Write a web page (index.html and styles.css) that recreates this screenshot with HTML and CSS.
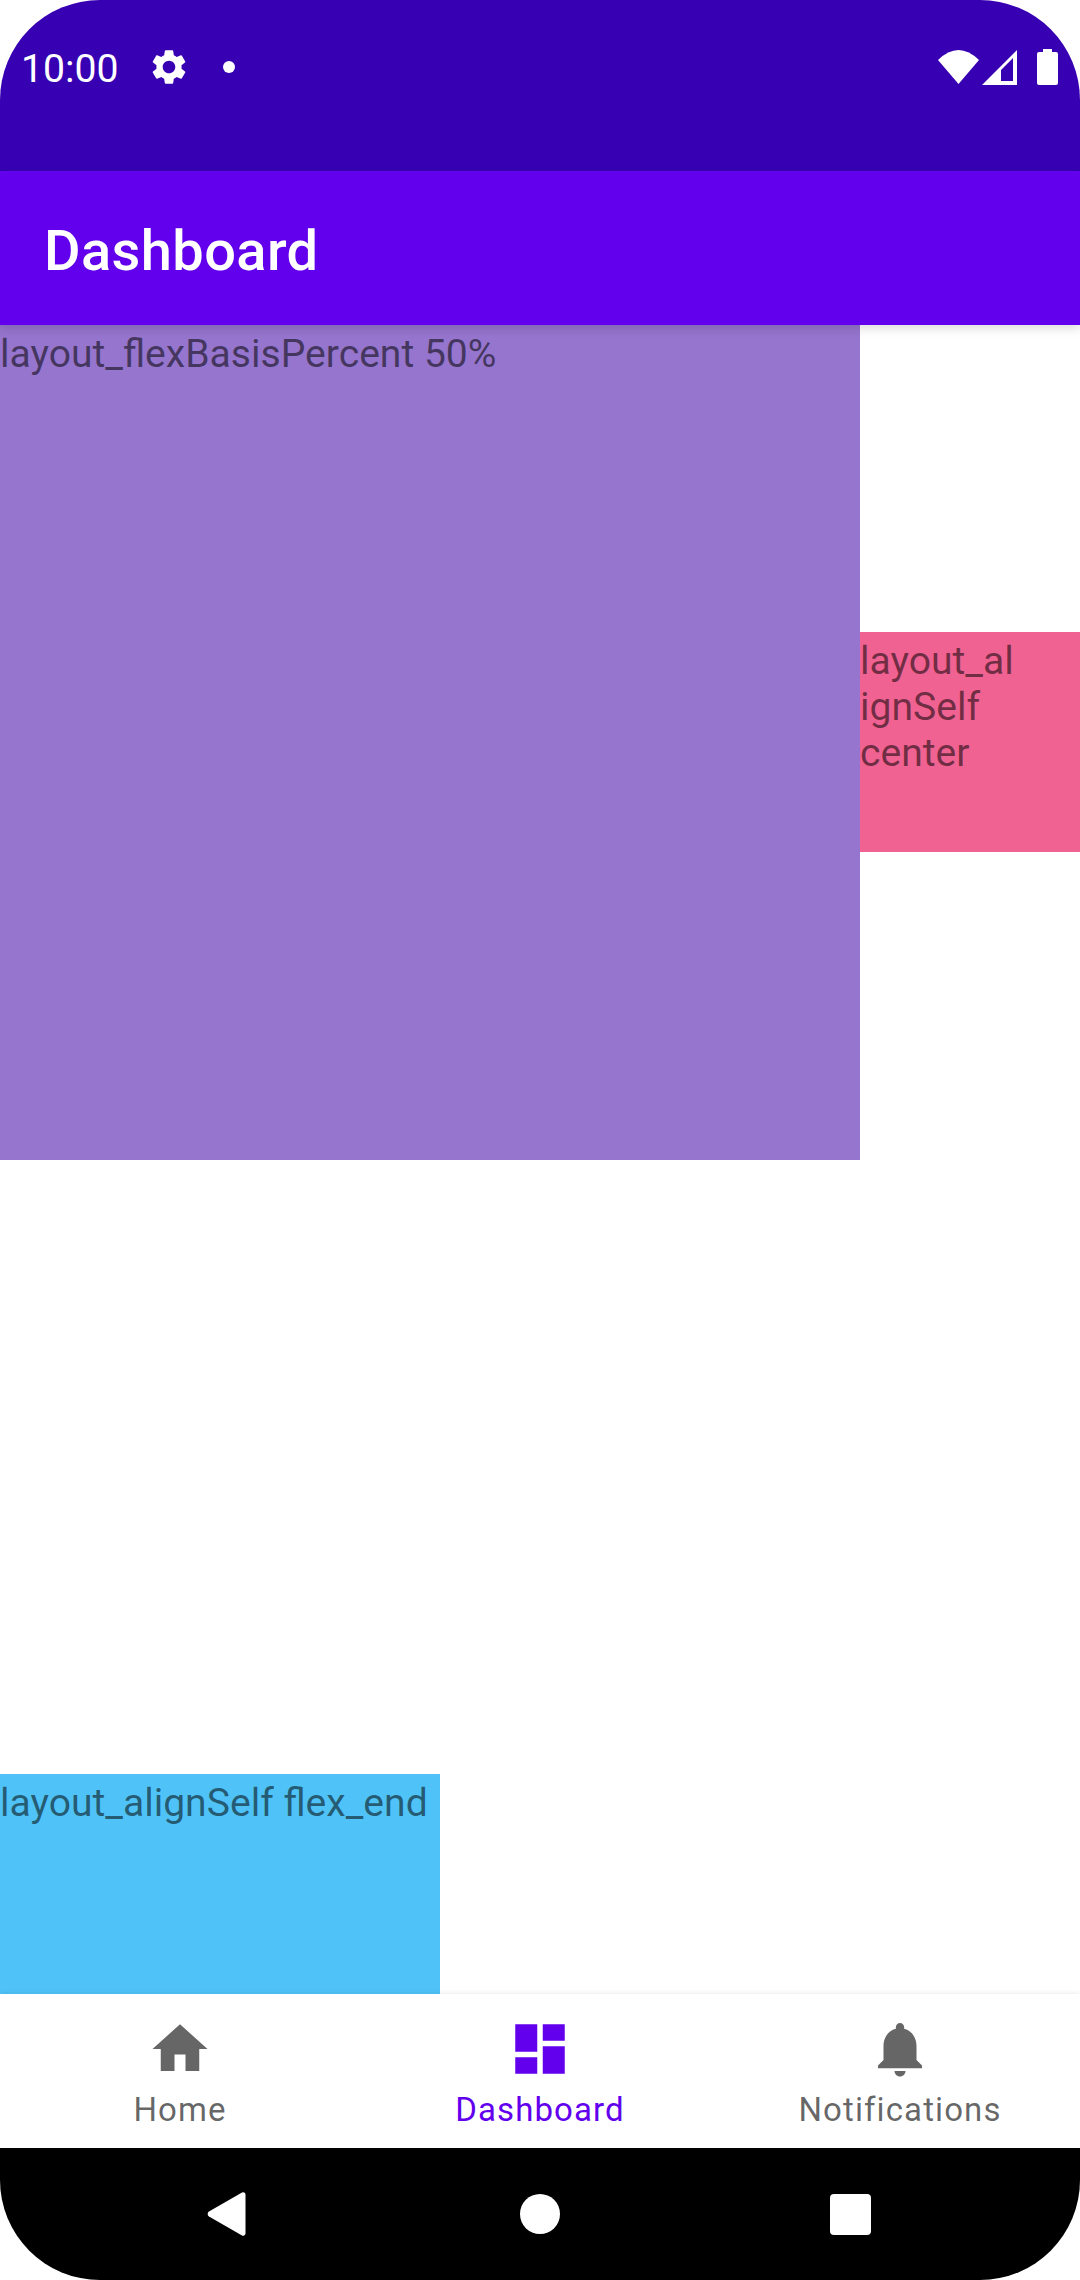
FILE: index.html
```html
<!DOCTYPE html>
<html lang="en">
<head>
    <meta charset="UTF-8">
    <title>Dashboard</title>
    <link rel="stylesheet" href="styles.css">
</head>
<body>

    <div class="phone">
        <div class="status-bar">
            <span class="clock">10:00</span>
            <svg class="gear" viewBox="0 0 24 24"><path d="M19.14 12.94c.04-.3.06-.61.06-.94 0-.32-.02-.64-.07-.94l2.03-1.58a.49.49 0 0 0 .12-.61l-1.92-3.32a.488.488 0 0 0-.59-.22l-2.39.96c-.5-.38-1.03-.7-1.62-.94l-.36-2.54a.484.484 0 0 0-.48-.41h-3.84c-.24 0-.43.17-.47.41l-.36 2.54c-.59.24-1.13.57-1.62.94l-2.39-.96c-.22-.08-.47 0-.59.22L2.74 8.87c-.12.21-.08.47.12.61l2.03 1.58c-.05.3-.09.63-.09.94s.02.64.07.94l-2.03 1.58a.49.49 0 0 0-.12.61l1.92 3.32c.12.22.37.29.59.22l2.39-.96c.5.38 1.03.7 1.62.94l.36 2.54c.05.24.24.41.48.41h3.84c.24 0 .44-.17.47-.41l.36-2.54c.59-.24 1.13-.56 1.62-.94l2.39.96c.22.08.47 0 .59-.22l1.92-3.32c.12-.22.07-.47-.12-.61l-2.01-1.58zM12 15.6c-1.98 0-3.6-1.62-3.6-3.6s1.62-3.6 3.6-3.6 3.6 1.62 3.6 3.6-1.62 3.6-3.6 3.6z"/></svg>
            <span class="dot"></span>
            <div class="status-right">
                <svg class="wifi" viewBox="0 0 41 34"><path d="M0 10Q20.500-10 41 10L20.500 34z"/></svg>
                <svg class="cell" viewBox="0 0 35 35"><path fill-rule="evenodd" d="M0 35L35 0V35zM19 31H31V8L19 20z"/></svg>
                <svg class="battery" viewBox="0 0 21 36"><path d="M6 0h9v3h4a2 2 0 0 1 2 2v29a2 2 0 0 1-2 2H2a2 2 0 0 1-2-2V5a2 2 0 0 1 2-2h4z"/></svg>
            </div>
        </div>

        <header class="app-bar">Dashboard</header>

        <main class="content">
            <div class="flex-line">
                <div class="box box-purple">layout_flexBasisPercent 50%</div>
                <div class="box box-pink">layout_al<br>ignSelf<br>center</div>
            </div>
            <div class="flex-line flex-line-end">
                <div class="box box-blue">layout_alignSelf flex_end</div>
            </div>
        </main>

        <nav class="bottom-nav">
            <div class="nav-item">
                <svg viewBox="0 0 24 24"><path d="M10 20v-6h4v6h5v-8h3L12 3 2 12h3v8z"/></svg>
                <span>Home</span>
            </div>
            <div class="nav-item active">
                <svg viewBox="0 0 24 24"><path d="M3 13h8V3H3v10zm0 8h8v-6H3v6zm10 0h8V11h-8v10zm0-18v6h8V3h-8z"/></svg>
                <span>Dashboard</span>
            </div>
            <div class="nav-item">
                <svg viewBox="0 0 24 24"><path d="M12 22c1.1 0 2-.9 2-2h-4c0 1.1.89 2 2 2zm6-6v-5c0-3.07-1.64-5.64-4.5-6.32V4c0-.83-.67-1.5-1.5-1.5s-1.5.67-1.5 1.5v.68C7.63 5.36 6 7.92 6 11v5l-2 2v1h16v-1l-2-2z"/></svg>
                <span>Notifications</span>
            </div>
        </nav>

        <div class="system-nav">
            <svg class="sys-back" viewBox="0 0 39 46"><path d="M35 1.500a2.500 2.500 0 0 1 3.500 2V42.500a2.500 2.500 0 0 1-3.500 2L2 25.500a3 3 0 0 1 0-5z"/></svg>
            <span class="sys-home"></span>
            <span class="sys-recent"></span>
        </div>
    </div>

</body>
</html>
```

FILE: styles.css
```css
body {
    margin: 0;
    background-color: #fff;
    font-family: Roboto, sans-serif;
}

.phone {
    width: 1080px;
    height: 2280px;
    display: flex;
    flex-direction: column;
    border-radius: 100px;
    overflow: hidden;
}

.status-bar {
    height: 171px;
    flex-shrink: 0;
    display: flex;
    align-items: flex-start;
    padding: 45px 22px 0 21px;
    box-sizing: border-box;
    background-color: #3700b3;
    color: #fff;
    fill: #fff;
}

.clock {
    font-size: 39.2px;
    line-height: 48px;
}

.gear {
    width: 42px;
    height: 42px;
    margin: 1px 0 0 29px;
}

.dot {
    width: 12px;
    height: 12px;
    margin: 16px 0 0 33px;
    border-radius: 50%;
    background-color: #fff;
}

.status-right {
    margin-left: auto;
    display: flex;
    align-items: flex-start;
    padding-top: 5px;
}

.wifi {
    width: 41px;
    height: 34px;
}

.cell {
    width: 35px;
    height: 35px;
    margin-left: 3px;
}

.battery {
    width: 21px;
    height: 36px;
    margin-left: 20px;
    margin-top: -1px;
}

.app-bar {
    height: 154px;
    flex-shrink: 0;
    position: relative;
    z-index: 2;
    box-sizing: border-box;
    padding: 3px 0 0 44px;
    background-color: #6200ee;
    color: #fff;
    font-size: 56px;
    font-weight: 500;
    letter-spacing: 0.4px;
    line-height: 154px;
    box-shadow: 0 3px 10px rgba(0, 0, 0, 0.15);
}

.content {
    flex: 1;
    display: flex;
    flex-direction: column;
    min-height: 0;
}

.flex-line {
    flex: 1;
    display: flex;
    align-items: center;
}

.flex-line-end {
    align-items: flex-end;
}

.box {
    box-sizing: border-box;
    padding-top: 6px;
    font-size: 39.1px;
    line-height: 46px;
    color: rgba(0, 0, 0, 0.54);
}

.box-purple {
    width: 860px;
    height: 100%;
    background-color: #9575cd;
}

.box-pink {
    width: 220px;
    height: 220px;
    background-color: #f06292;
}

.box-blue {
    width: 440px;
    height: 220px;
    background-color: #4fc3f7;
}

.bottom-nav {
    height: 154px;
    flex-shrink: 0;
    position: relative;
    z-index: 2;
    display: flex;
    background-color: #fff;
    box-shadow: 0 0 6px rgba(0, 0, 0, 0.1);
}

.nav-item {
    flex: 1;
    display: flex;
    flex-direction: column;
    align-items: center;
    padding-top: 22px;
    color: rgba(0, 0, 0, 0.6);
    fill: rgba(0, 0, 0, 0.6);
    font-size: 33px;
    letter-spacing: 1.1px;
    line-height: 39px;
}

.nav-item svg {
    width: 66px;
    height: 66px;
    margin-bottom: 8px;
}

.nav-item.active {
    color: #6200ee;
    fill: #6200ee;
}

.system-nav {
    height: 132px;
    flex-shrink: 0;
    display: flex;
    justify-content: center;
    align-items: center;
    padding-right: 2px;
    background-color: #000;
}

.sys-back {
    width: 39px;
    height: 46px;
    fill: #fff;
}

.sys-home {
    width: 40px;
    height: 40px;
    margin: 0 270px 0 274px;
    border-radius: 50%;
    background-color: #fff;
}

.sys-recent {
    width: 41px;
    height: 41px;
    border-radius: 4px;
    background-color: #fff;
}
```
